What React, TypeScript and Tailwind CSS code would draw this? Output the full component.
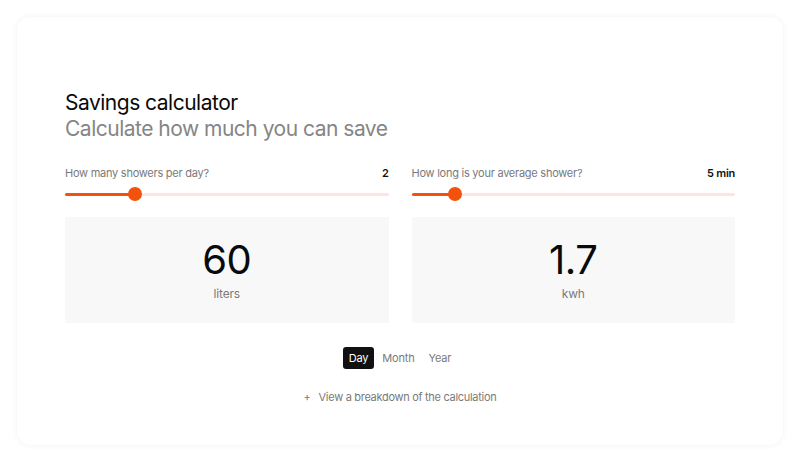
import { useState } from "react";

const Slider = ({ label, value, percent }: { label: string; value: string; percent: number }) => {
  return (
    <div className="flex flex-col">
      <div className="flex items-center justify-between text-[11px] leading-4 tracking-[-0.25px]">
        <span className="text-[#7a7a7a]">{label}</span>
        <span className="font-semibold text-[#111]">{value}</span>
      </div>
      <div className="relative mt-[6px] h-[14px]">
        <div className="absolute left-0 right-0 top-[5.5px] h-[3px] rounded-full bg-[#fde6dd]" />
        <div
          className="absolute left-0 top-[5.5px] h-[3px] rounded-full bg-[#f4520b]"
          style={{ width: `${percent}%` }}
        />
        <div
          className="absolute top-0 h-[14px] w-[14px] -translate-x-1/2 rounded-full bg-[#f4520b]"
          style={{ left: `${percent}%` }}
        />
      </div>
    </div>
  );
};

const ResultBox = ({ amount, unit }: { amount: string; unit: string }) => {
  return (
    <div className="flex h-[106px] flex-col items-center justify-center bg-[#f8f8f8]">
      <span className="text-[40px] leading-[44px] tracking-[-0.5px] text-[#0a0a0a]">{amount}</span>
      <span className="mt-[4px] text-[12px] leading-4 tracking-[-0.2px] text-[#7a7a7a]">{unit}</span>
    </div>
  );
};

export default function App() {
  const [period, setPeriod] = useState("Day");
  const periods = ["Day", "Month", "Year"];

  return (
    <div
      className="flex min-h-[463px] w-full items-start justify-center bg-white pt-[17px]"
      style={{ fontFamily: "Inter, 'Noto Sans', sans-serif" }}>
      <div className="flex h-[428px] w-[766px] flex-col rounded-[14px] bg-white px-12 pt-[73px] shadow-[0_0_6px_rgba(0,0,0,0.06)]">
        <h1 className="text-[21px] leading-[26px] tracking-[-0.5px] text-[#0a0a0a]">Savings calculator</h1>
        <h2 className="text-[21px] leading-[26px] tracking-[-0.5px] text-[#858585]">Calculate how much you can save</h2>

        <div className="mt-[23px] grid grid-cols-2 gap-x-[23px]">
          <Slider label="How many showers per day?" value="2" percent={21.5} />
          <Slider label="How long is your average shower?" value="5 min" percent={13.4} />
        </div>

        <div className="mt-[16px] grid grid-cols-2 gap-x-[23px]">
          <ResultBox amount="60" unit="liters" />
          <ResultBox amount="1.7" unit="kwh" />
        </div>

        <div className="mt-6 flex justify-center gap-0.5">
          {periods.map((p) => (
            <button
              key={p}
              onClick={() => setPeriod(p)}
              className={
                p === period
                  ? "h-[22px] rounded-[3px] bg-[#111] px-1.5 text-[11px] tracking-[-0.2px] text-white"
                  : "h-[22px] rounded-[3px] px-1.5 text-[11px] tracking-[-0.2px] text-[#7a7a7a]"
              }>
              {p}
            </button>
          ))}
        </div>

        <button className="mt-[20px] flex items-center justify-center gap-2 text-[11px] tracking-[-0.3px] text-[#7a7a7a]">
          <span>+</span>
          <span>View a breakdown of the calculation</span>
        </button>
      </div>
    </div>
  );
}
